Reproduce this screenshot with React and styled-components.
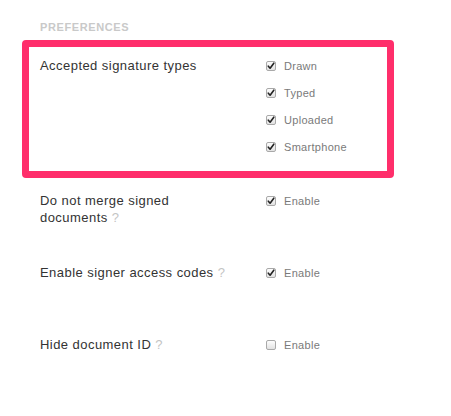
import styled, { createGlobalStyle } from "styled-components";

const GlobalStyle = createGlobalStyle`
  body {
    margin: 0;
    background: #ffffff;
    font-family: "Liberation Sans", Arial, sans-serif;
  }
`;

const Page = styled.div`
  padding: 20px 0 0 22px;
  width: 372px;
`;

const Heading = styled.div`
  padding-left: 18px;
  font-size: 11px;
  font-weight: bold;
  letter-spacing: 0.6px;
  color: #c9c9c9;
  line-height: 14px;
  margin-bottom: 6px;
`;

const Highlight = styled.div`
  border: 7px solid #ff2e6b;
  border-radius: 4px;
  padding: 10px 11px 16px;
`;

const Row = styled.div`
  display: grid;
  grid-template-columns: 225px 1fr;
  padding-left: ${(props) => (props.$inset ? "0" : "18px")};
  height: ${(props) => (props.$fixed ? "72px" : "auto")};
`;

const Label = styled.div`
  font-size: 13px;
  line-height: 17px;
  letter-spacing: 0.45px;
  color: #333333;
  max-width: 196px;
`;

const Help = styled.span`
  color: #c4c4c4;
`;

const Options = styled.div`
  display: flex;
  flex-direction: column;
  gap: 10px;
  padding-left: 1px;
`;

const Option = styled.div`
  display: flex;
  align-items: center;
  gap: 8px;
  height: 17px;
  font-size: 11px;
  letter-spacing: 0.3px;
  color: #7a7a7a;
`;

const Box = styled.span`
  box-sizing: border-box;
  width: 10px;
  height: 10px;
  border: 1px solid #a9a9a9;
  border-radius: 2px;
  background: linear-gradient(#fdfdfd, #e2e2e2);
  display: flex;
  align-items: center;
  justify-content: center;
`;

function Check({ checked, children }) {
  return (
    <Option>
      <Box>
        {checked && (
          <svg width="8" height="8" viewBox="0 0 8 8">
            <path
              d="M1.3 4.2 L3.1 6.2 L6.8 1.2"
              fill="none"
              stroke="#222"
              strokeWidth="1.6"
              strokeLinecap="round"
              strokeLinejoin="round"
            />
          </svg>
        )}
      </Box>
      {children}
    </Option>
  );
}

const Rest = styled.div`
  margin-top: 14px;
`;

const types = ["Drawn", "Typed", "Uploaded", "Smartphone"];

const settings = [
  { label: "Do not merge signed documents", checked: true },
  { label: "Enable signer access codes", checked: true },
  { label: "Hide document ID", checked: false },
];

export default function App() {
  return (
    <>
      <GlobalStyle />
      <Page>
        <Heading>PREFERENCES</Heading>
        <Highlight>
          <Row $inset>
            <Label>Accepted signature types</Label>
            <Options>
              {types.map((t) => (
                <Check key={t} checked>
                  {t}
                </Check>
              ))}
            </Options>
          </Row>
        </Highlight>
        <Rest>
          {settings.map((s) => (
            <Row key={s.label} $fixed>
              <Label>
                {s.label} <Help>?</Help>
              </Label>
              <Options>
                <Check checked={s.checked}>Enable</Check>
              </Options>
            </Row>
          ))}
        </Rest>
      </Page>
    </>
  );
}
